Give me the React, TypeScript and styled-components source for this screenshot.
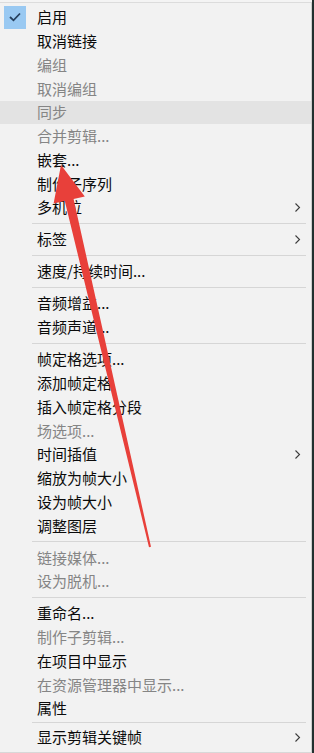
import styled, { createGlobalStyle } from 'styled-components';

type Entry =
  | { kind: 'sep'; tight?: boolean }
  | { kind: 'item'; label: string; disabled?: boolean; checked?: boolean; hover?: boolean; sub?: boolean };

const GlobalStyle = createGlobalStyle`
  html, body {
    margin: 0;
    padding: 0;
    background: #f4f4f4;
  }
  body {
    font-family: "Noto Sans CJK SC", "Noto Sans", sans-serif;
  }
`;

const Page = styled.div`
  position: relative;
  display: flex;
  width: 314px;
  height: 753px;
  overflow: hidden;
  background: #f4f4f4;
`;

const Menu = styled.div`
  flex: 0 0 311px;
  margin-top: 2px;
  padding-top: 2.5px;
  border-top: 1px solid #dcdcdc;
  border-right: 1px solid #cdcdcd;
  border-bottom: 1px solid #d8d8d8;
  background: #f2f2f2;
  display: flex;
  flex-direction: column;
  overflow: hidden;
`;

const Edge = styled.div`
  flex: 0 0 2px;
  background: #22302f;
`;

const Row = styled.div<{ $hover?: boolean }>`
  flex: none;
  display: flex;
  align-items: center;
  height: 23.75px;
  padding-left: 4px;
  background: ${(p) => (p.$hover ? '#e3e3e3' : 'transparent')};
`;

const CheckCell = styled.div<{ $on?: boolean }>`
  width: 22px;
  height: 23px;
  display: flex;
  align-items: center;
  justify-content: center;
  background: ${(p) => (p.$on ? '#99c9f2' : 'transparent')};
`;

const Label = styled.span<{ $disabled?: boolean }>`
  margin-left: 11px;
  font-size: 15px;
  line-height: 20px;
  color: ${(p) => (p.$disabled ? '#858585' : '#0b0b0b')};
  white-space: nowrap;
`;

const Chevron = styled.svg`
  margin-left: auto;
  margin-right: 10px;
  flex: none;
`;

const Separator = styled.div<{ $tight?: boolean }>`
  flex: none;
  height: 1px;
  margin: ${(p) => (p.$tight ? '2.15px' : '3.65px')} 5px ${(p) => (p.$tight ? '2.15px' : '3.65px')} 32px;
  background: #d6d6d6;
`;

const Overlay = styled.svg`
  position: absolute;
  left: 0;
  top: 0;
  pointer-events: none;
`;

const entries: Entry[] = [
  { kind: 'item', label: '启用', checked: true },
  { kind: 'item', label: '取消链接' },
  { kind: 'item', label: '编组', disabled: true },
  { kind: 'item', label: '取消编组', disabled: true },
  { kind: 'item', label: '同步', disabled: true, hover: true },
  { kind: 'item', label: '合并剪辑...', disabled: true },
  { kind: 'item', label: '嵌套...' },
  { kind: 'item', label: '制作子序列' },
  { kind: 'item', label: '多机位', sub: true },
  { kind: 'sep' },
  { kind: 'item', label: '标签', sub: true },
  { kind: 'sep' },
  { kind: 'item', label: '速度/持续时间...' },
  { kind: 'sep' },
  { kind: 'item', label: '音频增益...' },
  { kind: 'item', label: '音频声道...' },
  { kind: 'sep' },
  { kind: 'item', label: '帧定格选项...' },
  { kind: 'item', label: '添加帧定格' },
  { kind: 'item', label: '插入帧定格分段' },
  { kind: 'item', label: '场选项...', disabled: true },
  { kind: 'item', label: '时间插值', sub: true },
  { kind: 'item', label: '缩放为帧大小' },
  { kind: 'item', label: '设为帧大小' },
  { kind: 'item', label: '调整图层' },
  { kind: 'sep' },
  { kind: 'item', label: '链接媒体...', disabled: true },
  { kind: 'item', label: '设为脱机...', disabled: true },
  { kind: 'sep' },
  { kind: 'item', label: '重命名...' },
  { kind: 'item', label: '制作子剪辑...', disabled: true },
  { kind: 'item', label: '在项目中显示' },
  { kind: 'item', label: '在资源管理器中显示...', disabled: true },
  { kind: 'item', label: '属性' },
  { kind: 'sep', tight: true },
  { kind: 'item', label: '显示剪辑关键帧', sub: true },
];

export default function App() {
  return (
    <>
      <GlobalStyle />
      <Page>
        <Menu>
          {entries.map((e, i) =>
            e.kind === 'sep' ? (
              <Separator key={i} $tight={e.tight} />
            ) : (
              <Row key={i} $hover={e.hover}>
                <CheckCell $on={e.checked}>
                  {e.checked && (
                    <svg width='12' height='10' viewBox='0 0 12 10'>
                      <path d='M1 5 L4.5 8.3 L11 1.5' fill='none' stroke='#26405e' strokeWidth='1.8' />
                    </svg>
                  )}
                </CheckCell>
                <Label $disabled={e.disabled}>{e.label}</Label>
                {e.sub && (
                  <Chevron width='7' height='11' viewBox='0 0 7 11'>
                    <path d='M1.5 1.5 L5.5 5.5 L1.5 9.5' fill='none' stroke='#3c3c3c' strokeWidth='1.1' />
                  </Chevron>
                )}
              </Row>
            )
          )}
        </Menu>
        <Edge />
        {/* red annotation arrow pointing at 嵌套 */}
        <Overlay width='314' height='753' viewBox='0 0 314 753'>
          <polygon points='61,165 53.6,203.6 64.8,201 149,547.2 151,546.8 73.6,199 84.8,196.4' fill='#e8403a' />
        </Overlay>
      </Page>
    </>
  );
}
